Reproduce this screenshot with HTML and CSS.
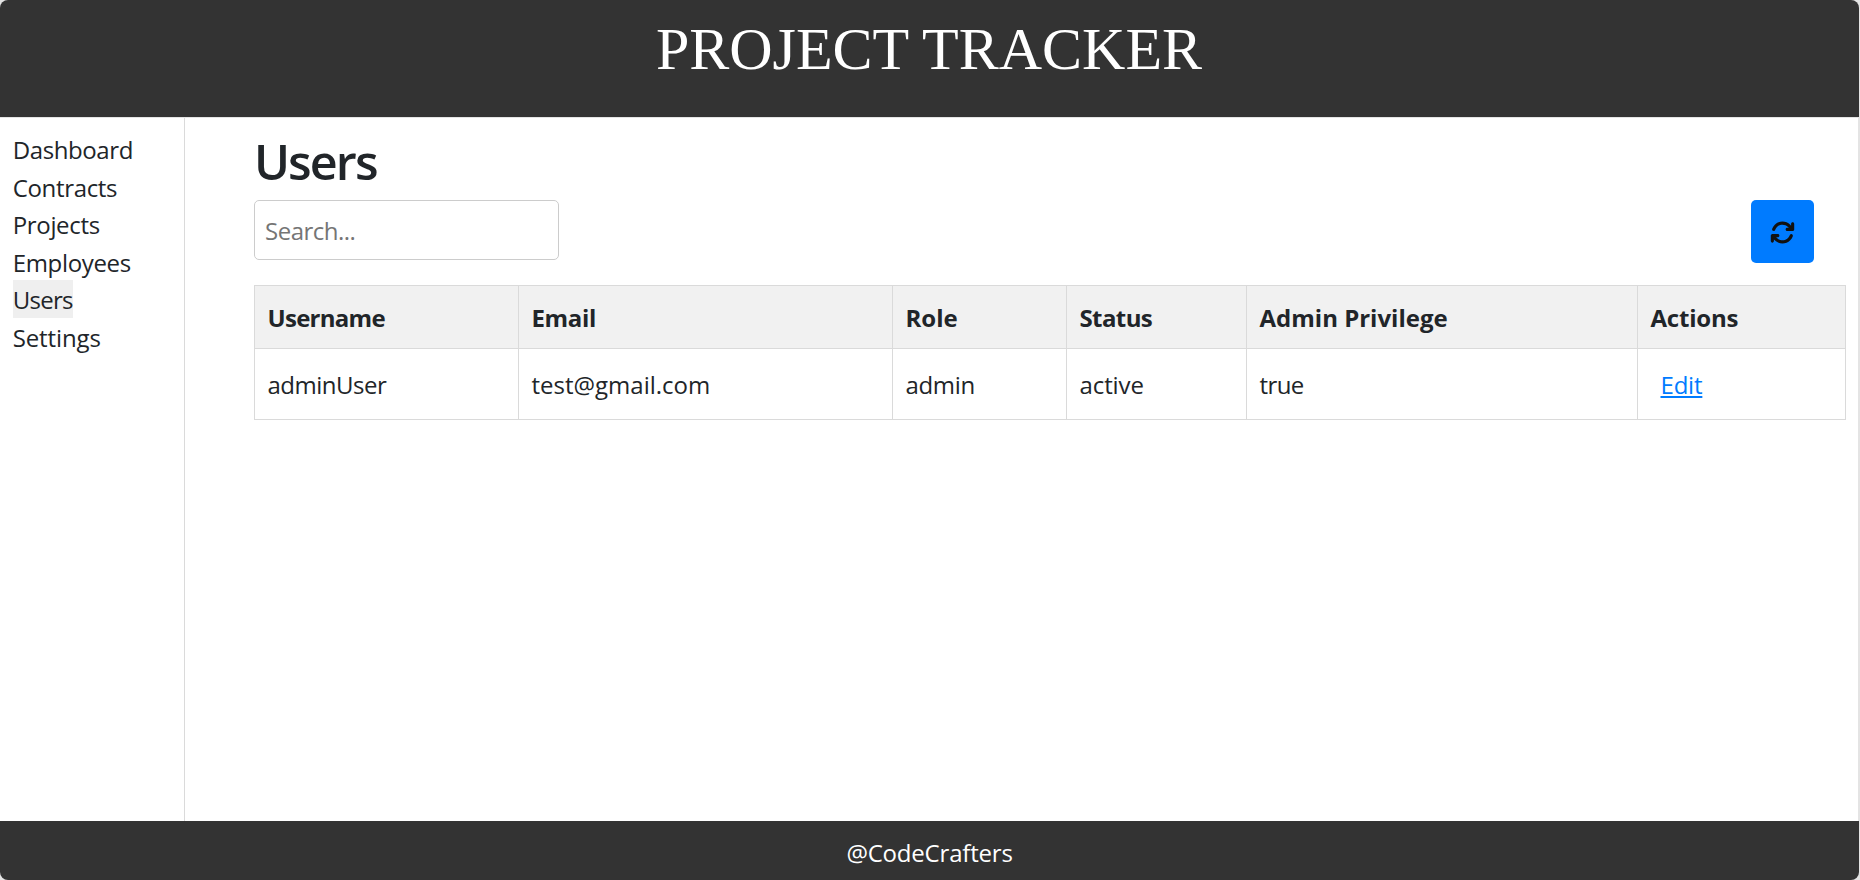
FILE: index.html
```html
<!DOCTYPE html>
<html lang="en">
<head>
<meta charset="utf-8">
<title>Project Tracker</title>
<link rel="stylesheet" href="styles.css">
</head>
<body>
<div class="app">
  <header class="header"><div class="brand">PROJECT TRACKER</div></header>
  <div class="body">
    <nav class="sidebar">
      <a class="nav-link t4">Dashboard</a>
      <a class="nav-link t3">Contracts</a>
      <a class="nav-link t3">Projects</a>
      <a class="nav-link t3">Employees</a>
      <a class="nav-link t7 active">Users</a>
      <a class="nav-link t1">Settings</a>
    </nav>
    <main class="main">
      <h1 class="title">Users</h1>
      <div class="toolbar">
        <input class="search t5" type="text" placeholder="Search...">
        <button class="refresh" aria-label="Refresh">
          <svg class="icon" viewBox="0 0 512 512"><path d="M105.1 202.6c7.7-21.8 20.2-42.3 37.8-59.8c62.5-62.5 163.8-62.5 226.3 0L386.3 160H352c-17.7 0-32 14.3-32 32s14.3 32 32 32H463.9c17.7 0 32-14.3 32-32V80c0-17.7-14.3-32-32-32s-32 14.3-32 32v35.2L414.4 97.6c-87.5-87.5-229.3-87.5-316.8 0C73.2 122 55.6 150.7 44.8 181.4c-5.9 16.7 2.9 34.9 19.5 40.8s34.9-2.9 40.8-19.5zM39 289.3c-5 1.5-9.8 4.2-13.7 8.2c-4 4-6.7 8.8-8.1 14c-.3 1.2-.6 2.5-.8 3.8c-.3 1.7-.4 3.4-.4 5.1V432c0 17.7 14.3 32 32 32s32-14.3 32-32V396.9l17.6 17.5c87.5 87.4 229.3 87.4 316.7 0c24.4-24.4 42.1-53.1 52.9-83.7c5.9-16.7-2.9-34.9-19.5-40.8s-34.9 2.9-40.8 19.5c-7.7 21.8-20.2 42.3-37.8 59.8c-62.5 62.5-163.8 62.5-226.3 0l-.1-.1L125.6 352H160c17.7 0 32-14.3 32-32s-14.3-32-32-32H48.4c-1.6 0-3.2 .1-4.8 .3s-3.1 .5-4.6 1z"/></svg>
        </button>
      </div>
      <table class="table">
        <colgroup><col class="c-user"><col class="c-email"><col class="c-role"><col class="c-status"><col class="c-admin"><col class="c-actions"></colgroup>
        <thead>
          <tr><th class="t7">Username</th><th class="t3">Email</th><th>Role</th><th class="t6">Status</th><th>Admin Privilege</th><th class="t2">Actions</th></tr>
        </thead>
        <tbody>
          <tr><td class="t5">adminUser</td><td>test@gmail.com</td><td class="t3">admin</td><td class="t1">active</td><td class="t6">true</td><td><a class="edit t2">Edit</a></td></tr>
        </tbody>
      </table>
    </main>
  </div>
  <footer class="footer t2">@CodeCrafters</footer>
</div>
</body>
</html>
```
FILE: styles.css
```css
* { box-sizing: border-box; }

body {
  margin: 0;
  height: 880px;
  overflow: hidden;
  background: #e4e4e4;
  color: #212529;
  font: 24px/39.5px "Open Sans", "Noto Sans", sans-serif;
}

.app {
  width: 1859px;
  height: 880px;
  display: flex;
  flex-direction: column;
  border-radius: 8px;
  overflow: hidden;
}

.header {
  flex: 0 0 117px;
  padding: 12.5px 1px 0 0;
  background: #333;
  color: #fff;
  text-align: center;
}

.brand { font: 60px/72px "Liberation Serif", serif; }

.body {
  flex: 1;
  display: flex;
  width: 1858px;
  background: #fff;
  border-top: 1px solid #e4e4e4;
}

.sidebar {
  flex: 0 0 185px;
  display: flex;
  flex-direction: column;
  align-items: flex-start;
  padding: 12.2px 0 0 12.7px;
  border-right: 1px solid #dadada;
}

.nav-link { height: 37.5px; line-height: 39.5px; }
.nav-link.active { background: #efefef; }

.main { flex: 1; padding: 12px 12px 0 69px; }

.title {
  margin: 0;
  height: 70px;
  font-size: 48.5px;
  font-weight: 600;
  line-height: 62px;
  letter-spacing: -1.9px;
}

.toolbar {
  display: flex;
  justify-content: space-between;
  align-items: flex-start;
  height: 85px;
  padding-right: 32px;
}

.search {
  width: 305px;
  height: 60px;
  padding: 1px 10px 0;
  border: 1px solid #ccc;
  border-radius: 5px;
  background: #fff;
  font: inherit;
}
.search::placeholder { color: #757575; opacity: 1; }

.refresh {
  display: flex;
  align-items: center;
  justify-content: center;
  width: 63px;
  height: 63px;
  padding: 2px 0 0;
  border: 0;
  border-radius: 5px;
  background: #007bff;
  color: #111;
}
.icon { width: 25px; height: 25px; fill: currentColor; }

.table {
  width: 1592px;
  table-layout: fixed;
  border-collapse: collapse;
}
.table th, .table td {
  padding: 1px 12.5px 0;
  border: 1px solid #dadada;
  text-align: left;
  vertical-align: middle;
}
.table th { height: 63px; background: #f1f1f1; font-weight: 700; }
.table td { height: 71px; }

.c-user { width: 264px; }
.c-email { width: 374px; }
.c-role { width: 174px; }
.c-status { width: 180px; }
.c-admin { width: 391px; }

.edit {
  margin-left: 10px;
  color: #007bff;
  text-decoration: underline;
  text-decoration-thickness: 2px;
  text-underline-offset: 2px;
}

.footer {
  flex: 0 0 59px;
  padding-top: 12px;
  background: #333;
  color: #fff;
  text-align: center;
}

/* tracking steps */
.t1 { letter-spacing: -0.1px; }
.t2 { letter-spacing: -0.2px; }
.t3 { letter-spacing: -0.33px; }
.t4 { letter-spacing: -0.4px; }
.t5 { letter-spacing: -0.5px; }
.t6 { letter-spacing: -0.6px; }
.t7 { letter-spacing: -0.72px; }
```
